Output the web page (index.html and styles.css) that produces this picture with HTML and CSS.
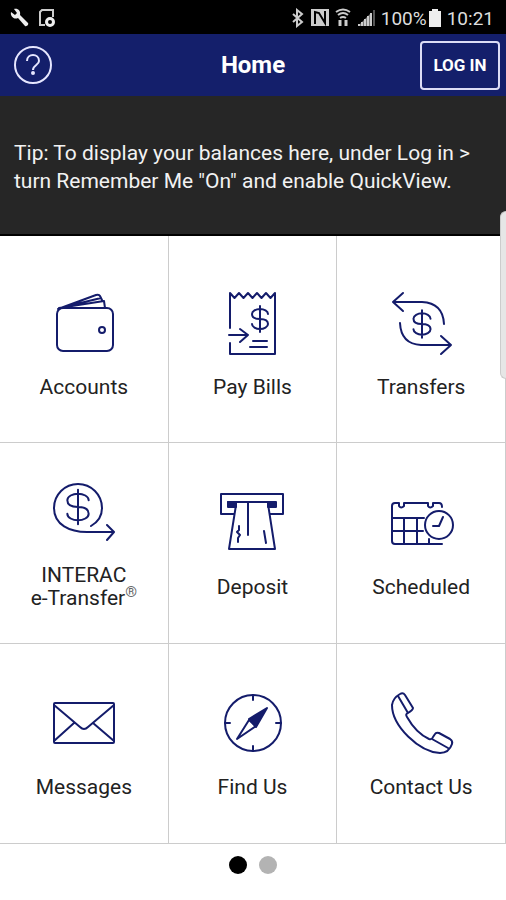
FILE: index.html
```html
<!DOCTYPE html>
<html lang="en">
<head>
<meta charset="UTF-8">
<meta name="viewport" content="width=device-width, initial-scale=1.0">
<title>Home</title>
<link rel="stylesheet" href="styles.css">
</head>
<body>

<svg class="defs" aria-hidden="true">
    <symbol id="dollar" viewBox="-12 -15 24 30">
        <path d="M8 -5C8 -8 4 -10 0 -10S-8 -8 -8 -5C-8 -1 -4 0 0 0S8 1 8 5C8 8 4 10 0 10S-8 8 -8 5M0 -13V13"/>
    </symbol>
</svg>

<div class="statusbar">
    <div class="status-left">
        <svg width="20" height="20" viewBox="0 0 20 20"><path d="M1 4l4 3 2-2-3-4c4-1 7 2 6 6l8 8c1 1-1 4-3 3L8 10C4 12 0 8 1 4z" fill="#eee"/></svg>
        <svg width="18" height="20" viewBox="0 0 18 20" fill="none" stroke="#ccc" stroke-width="2"><path d="M15 9V2H4L2 4V17H7"/><circle cx="12" cy="14" r="3.5" stroke="#eee" stroke-width="3"/></svg>
    </div>
    <div class="status-right">
        <svg width="14" height="20" viewBox="0 0 14 20" fill="none" stroke="#ccc" stroke-width="2"><path d="M2 6l9 8-5 4V2l5 4-9 8"/></svg>
        <svg width="18" height="20" viewBox="0 0 18 20"><path d="M0 1h18v17H0z" fill="#ccc"/><path d="M4 16V4l4 1 6 10V3" fill="none" stroke="#000" stroke-width="2"/></svg>
        <svg width="16" height="20" viewBox="0 0 16 20" fill="none" stroke="#ccc" stroke-width="2"><path d="M1 4Q8 -1 15 4M3 7Q8 3 13 7M5 10Q8 8 11 10"/><path d="M5 12v6M11 12v6" stroke-width="3"/></svg>
        <svg width="18" height="20" viewBox="0 0 18 20" fill="none" stroke="#ccc" stroke-width="2"><path d="M1 18L14 5V18Z" fill="#777" stroke="none"/><path d="M2 18v-2M5 18v-4M8 18v-7M11 18V8M14 18V5"/><path d="M17 18V2" stroke="#555"/></svg>
        <span>100%</span>
        <svg width="12" height="20" viewBox="0 0 12 20"><path d="M3 1h6v2h3v16H0V3h3z" fill="#eee"/></svg>
        <span class="clock">10:21</span>
    </div>
</div>

<header class="header">
    <button class="help" aria-label="Help">
        <svg width="38" height="38" viewBox="0 0 38 38" fill="none" stroke="#e6e6ff" stroke-width="2"><circle cx="19" cy="19" r="18"/><path d="M13 15C13 7 25 7 25 15C25 19 19 19 19 24"/><circle cx="19" cy="27" r="1"/></svg>
    </button>
    <h1>Home</h1>
    <button class="login">LOG IN</button>
</header>

<p class="tip">Tip: To display your balances here, under Log in &gt; turn Remember Me "On" and enable QuickView.</p>

<nav class="menu">
    <a href="#">
        <svg class="icon" viewBox="0 0 72 72"><rect x="9" y="20" width="56" height="43" rx="6"/><circle cx="54" cy="42" r="3"/><path d="M10 21L48 7Q51 6 52 8L54 12M11 20L56 13L57 20M20 18L53 10"/></svg>
        <span>Accounts</span>
    </a>
    <a href="#">
        <svg class="icon" viewBox="0 0 72 72"><path d="M14 40V5L18.5 10L23 5L27.5 10L32 5L36.5 10L41 5L45.5 10L50 5L54.5 10L59 5V66H14V55M13 47H32M24 41L32 47L24 54M37 53H51M34 59H51"/><use href="#dollar" x="31" y="16" width="26" height="30"/></svg>
        <span>Pay Bills</span>
    </a>
    <a href="#">
        <svg class="icon" viewBox="0 0 72 72"><path d="M18 5L8 14L18 23M8 14H37Q58 15 59 36M15 35Q16 56 36 57H66M56 48L66 57L56 66"/><use href="#dollar" x="24" y="20" width="26" height="32"/></svg>
        <span>Transfers</span>
    </a>
    <a href="#">
        <svg class="icon" viewBox="0 0 72 72"><path d="M43 50C50 46 54 39 54 32A24 24 0 0 0 6 32C6 49 22 56 39 56H66M59 49L66 56L59 64"/><use href="#dollar" x="14" y="11" width="32" height="40"/></svg>
        <span>INTERAC<br>e-Transfer<sup>®</sup></span>
    </a>
    <a href="#">
        <svg class="icon" viewBox="0 0 72 72"><path d="M18 26H5V6H67V26H54M12 14H59M20 17L13 61H59L52 16M32 14V47M23 38V42L21 44L24 47L22 50V54M48 43L50 55"/><path d="M12 14h8v5h-8zM52 14h8v5h-8z" class="solid"/></svg>
        <span>Deposit</span>
    </a>
    <a href="#">
        <svg class="icon" viewBox="0 0 72 72"><path d="M57 56H10Q7 56 7 53V18Q7 15 10 15H14V18Q16 21 19 18V15H43V18Q45 21 48 18V15H54Q57 15 57 19M7 30H39M7 43H38M19 30V56M32 30V56M44 51V56"/><circle cx="54" cy="37" r="14"/><path d="M58 29L54 38H48"/></svg>
        <span>Scheduled</span>
    </a>
    <a href="#">
        <svg class="icon" viewBox="0 0 72 72"><rect x="6" y="15" width="60" height="40" rx="1"/><path d="M6 17L32 39Q36 43 40 39L66 17M26 35L6 53M45 35L66 53"/></svg>
        <span>Messages</span>
    </a>
    <a href="#">
        <svg class="icon" viewBox="0 0 72 72"><circle cx="37" cy="35" r="28"/><path d="M37 7V12M37 58V63M9 35H14M60 35H65M21 51L33 32L40 38Z"/><path d="M51 20L33 31L40 39Z" class="solid"/></svg>
        <span>Find Us</span>
    </a>
    <a href="#">
        <svg class="icon" viewBox="0 0 72 72"><path d="M15 6Q18 4 20 7L28 20Q28 22 23 25Q20 26 22 29Q31 45 44 51Q47 52 48 49L50 46Q51 44 54 45L65 51Q68 53 67 56Q64 65 55 65C34 64 7 38 7 17Q8 10 15 6ZM13 8L23 25M47 51L63 60"/></svg>
        <span>Contact Us</span>
    </a>
</nav>

<div class="dots">
    <span class="dot active"></span>
    <span class="dot"></span>
</div>

<div class="edge-handle"></div>

</body>
</html>
```
FILE: styles.css
```css
* {
    box-sizing: border-box;
}

body {
    font-family: Roboto, Arial, sans-serif;
    margin: 0;
    background-color: #fff;
    color: #222;
    overflow-x: hidden;
}

.defs {
    position: absolute;
    width: 0;
    height: 0;
}

.statusbar {
    display: flex;
    align-items: center;
    justify-content: space-between;
    height: 34px;
    padding: 2px 12px 0 10px;
    background-color: #000;
    color: #ddd;
    font-size: 19px;
}

.status-left,
.status-right {
    display: flex;
    align-items: center;
    gap: 6px;
}

.status-left {
    gap: 8px;
}

.status-right span {
    margin-right: -4px;
}

.status-right .clock {
    margin: 0;
}

.header {
    display: grid;
    grid-template-columns: 1fr auto 1fr;
    align-items: center;
    height: 62px;
    padding: 0 6px 0 14px;
    background-color: #141f6b;
    color: #fff;
}

.header h1 {
    margin: 0 8px 0 0;
    font-size: 24px;
    font-weight: bold;
}

.header button {
    background: none;
    color: #fff;
    font-family: inherit;
    cursor: pointer;
}

.help {
    justify-self: start;
    display: flex;
    padding: 0;
    border: none;
}

.login {
    justify-self: end;
    width: 80px;
    height: 49px;
    padding: 0;
    border: 2px solid #dcdcf5;
    border-radius: 4px;
    font-size: 17px;
    font-weight: bold;
}

.tip {
    display: flex;
    align-items: center;
    min-height: 140px;
    margin: 0;
    padding: 4px 14px 0;
    border-bottom: 2px solid #000;
    background-color: #262626;
    color: #f2f2f2;
    font-size: 21px;
    line-height: 28px;
}

.menu {
    display: grid;
    grid-template-columns: repeat(3, 1fr);
    grid-template-rows: 207px 201px 200px;
}

.menu a {
    display: flex;
    flex-direction: column;
    align-items: center;
    justify-content: center;
    gap: 16px;
    border-right: 1px solid #ccc;
    border-bottom: 1px solid #ccc;
    color: #222;
    font-size: 21px;
    line-height: 23px;
    text-align: center;
    text-decoration: none;
}

.menu a:nth-child(-n+3) {
    padding-top: 8px;
}

.menu sup {
    font-size: 15px;
    line-height: 0;
    color: #666;
}

.icon {
    width: 72px;
    height: 72px;
    fill: none;
    stroke: #141c6b;
    stroke-width: 2;
    stroke-linecap: round;
    stroke-linejoin: round;
}

.icon .solid {
    fill: #141c6b;
}

#dollar path {
    vector-effect: non-scaling-stroke;
}

.dots {
    display: flex;
    justify-content: center;
    gap: 12px;
    padding: 12px 0;
}

.dot {
    width: 18px;
    height: 18px;
    border-radius: 50%;
    background-color: #b3b3b3;
}

.dot.active {
    background-color: #000;
}

/* system edge panel tab, sits over the page */
.edge-handle {
    position: absolute;
    top: 211px;
    right: 0;
    width: 6px;
    height: 168px;
    border: 1px solid #ccc;
    border-right: none;
    border-radius: 6px 0 0 6px;
    background-color: #e6e6e6;
}
```
